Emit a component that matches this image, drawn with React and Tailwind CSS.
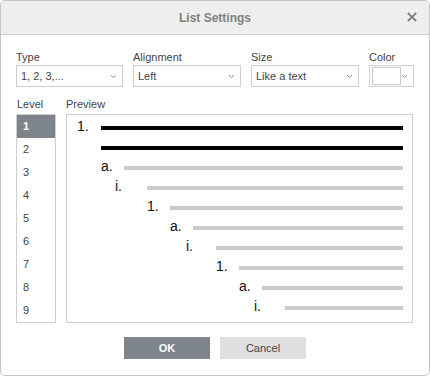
import React from "react";

const font = { fontFamily: '"Liberation Sans", Arial, sans-serif' };

const Chevron = ({ className = "" }) => (
  <svg width="7" height="5" viewBox="0 0 7 5" className={className}>
    <path d="M1 1.2 L3.5 3.6 L6 1.2" fill="none" stroke="#8a8a8a" strokeWidth="1" />
  </svg>
);

const Select = ({ value }) => (
  <div className="h-[22px] border border-[#cfcfcf] bg-white flex items-center pl-[4px] pr-[5px] text-[11px] text-[#444]">
    <span className="flex-1 truncate">{value}</span>
    <Chevron />
  </div>
);

const previewRows = [
  { label: "1.", pad: "pl-[10px]", w: "w-[24px]", line: "bg-black" },
  { label: "", pad: "pl-[34px]", w: "w-0", line: "bg-black" },
  { label: "a.", pad: "pl-[34px]", w: "w-[23px]", line: "bg-[#cbcbcb]" },
  { label: "i.", pad: "pl-[48px]", w: "w-[32px]", line: "bg-[#cbcbcb]" },
  { label: "1.", pad: "pl-[80px]", w: "w-[23px]", line: "bg-[#cbcbcb]" },
  { label: "a.", pad: "pl-[103px]", w: "w-[23px]", line: "bg-[#cbcbcb]" },
  { label: "i.", pad: "pl-[119px]", w: "w-[30px]", line: "bg-[#cbcbcb]" },
  { label: "1.", pad: "pl-[149px]", w: "w-[23px]", line: "bg-[#cbcbcb]" },
  { label: "a.", pad: "pl-[172px]", w: "w-[23px]", line: "bg-[#cbcbcb]" },
  { label: "i.", pad: "pl-[187px]", w: "w-[31px]", line: "bg-[#cbcbcb]" },
];

export default function App() {
  return (
    <div style={font} className="w-[430px] h-[376px] bg-white border border-[#c6c6c6] rounded-[5px] overflow-hidden flex flex-col">
      <div className="relative h-[34px] shrink-0 bg-[#eeeeee] border-b border-[#cfcfcf] flex items-center justify-center">
        <span className="text-[12px] font-bold text-[#808080]">List Settings</span>
        <svg width="10" height="10" viewBox="0 0 10 10" className="absolute left-[406px] top-[11px]">
          <path d="M0.8 0.8 L9.2 9.2 M9.2 0.8 L0.8 9.2" stroke="#7a7a7a" strokeWidth="1.8" />
        </svg>
      </div>

      <div className="px-[15px] pt-[16px] flex flex-col">
        <div className="grid grid-cols-[107px_108px_108px_45px] gap-x-[10px] text-[11px] text-[#444]">
          <div>
            <div className="leading-[13px] mb-[1px]">Type</div>
            <Select value="1, 2, 3,..." />
          </div>
          <div>
            <div className="leading-[13px] mb-[1px]">Alignment</div>
            <Select value="Left" />
          </div>
          <div>
            <div className="leading-[13px] mb-[1px]">Size</div>
            <Select value="Like a text" />
          </div>
          <div>
            <div className="leading-[13px] mb-[1px]">Color</div>
            <div className="h-[22px] border border-[#cfcfcf] bg-white flex items-center pl-[2px] pr-[5px]">
              <div className="w-[31px] h-[18px] border border-[#c8c8c8] bg-white" />
              <div className="flex-1 flex justify-end">
                <Chevron />
              </div>
            </div>
          </div>
        </div>

        <div className="mt-[11px] flex gap-x-[10px] text-[11px] text-[#444]">
          <div className="w-[40px]">
            <div className="leading-[13px] mb-[3px] pl-[1px]">Level</div>
            <div className="h-[209px] border border-[#cfcfcf] overflow-hidden">
              {[1, 2, 3, 4, 5, 6, 7, 8, 9].map((n) => (
                <div
                  key={n}
                  className={
                    n === 1
                      ? "h-[23px] flex items-center pl-[6px] bg-[#7d848b] text-white font-bold"
                      : "h-[23px] flex items-center pl-[6px]"
                  }
                >
                  {n}
                </div>
              ))}
            </div>
          </div>
          <div className="flex-1 mr-[1px]">
            <div className="leading-[13px] mb-[3px]">Preview</div>
            <div className="h-[209px] border border-[#cfcfcf] pt-[3px] pr-[9px]">
              {previewRows.map((r, i) => (
                <div key={i} className={`h-[20px] flex items-center ${r.pad}`}>
                  <span className={`${r.w} shrink-0 text-[14px] leading-[16px] text-[#111] -mt-[4px]`}>{r.label}</span>
                  <div className={`flex-1 h-[4px] ${r.line}`} />
                </div>
              ))}
            </div>
          </div>
        </div>

        <div className="mt-[14px] flex justify-center gap-x-[10px] text-[11px]">
          <button className="w-[86px] h-[22px] bg-[#7d848b] text-white font-bold">OK</button>
          <button className="w-[86px] h-[22px] bg-[#dfe0e1] text-[#444]">Cancel</button>
        </div>
      </div>
    </div>
  );
}
